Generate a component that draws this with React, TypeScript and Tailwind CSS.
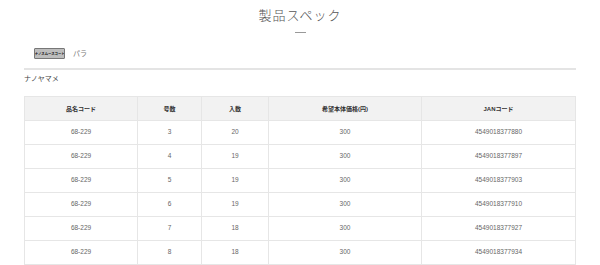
const FONT = { fontFamily: '"Liberation Sans", "Noto Sans CJK JP", sans-serif' };

const rows = [
  { code: "68-229", go: "3", iri: "20", price: "300", jan: "4549018377880" },
  { code: "68-229", go: "4", iri: "19", price: "300", jan: "4549018377897" },
  { code: "68-229", go: "5", iri: "19", price: "300", jan: "4549018377903" },
  { code: "68-229", go: "6", iri: "19", price: "300", jan: "4549018377910" },
  { code: "68-229", go: "7", iri: "18", price: "300", jan: "4549018377927" },
  { code: "68-229", go: "8", iri: "18", price: "300", jan: "4549018377934" },
];

const heads = ["品名コード", "号数", "入数", "希望本体価格(円)", "JANコード"];

export default function App() {
  return (
    <div className="w-[600px] h-[265px] overflow-hidden bg-white" style={FONT}>
      {/* 見出し */}
      <div className="pt-[7px]">
        <h1 className="h-[18px] text-center text-[13px] leading-[18px] font-light text-[#555] tracking-[1px]">
          製品スペック
        </h1>
        <div className="mx-auto mt-[7px] h-px w-[11px] bg-[#999]" />
      </div>

      {/* タブ */}
      <div className="mt-[15px] flex items-center pl-[34px]">
        <div className="flex h-[11px] w-[31px] items-center justify-center overflow-hidden rounded-[1px] border border-[#777] bg-[#bdbdbd]">
          <span className="inline-block scale-[0.56] text-[6px] font-bold leading-none text-[#111] whitespace-nowrap">
            ナノスムースコート
          </span>
        </div>
        <span className="ml-[8px] text-[7px] leading-none text-[#777]">パラ</span>
      </div>

      <div className="mx-[24px] mt-[9px] h-[2px] bg-[#e4e4e4]" />

      <div className="mx-[24px] mt-[4px] text-[7px] leading-[9px] text-[#444]">ナノヤマメ</div>

      {/* スペック表 */}
      <table className="ml-[24px] mt-[13px] w-[551px] table-fixed border-collapse">
        <colgroup>
          <col className="w-[113px]" />
          <col className="w-[64px]" />
          <col className="w-[67px]" />
          <col className="w-[153px]" />
          <col className="w-[154px]" />
        </colgroup>
        <thead>
          <tr className="h-[24px] bg-[#f2f2f2]">
            {heads.map((h) => (
              <th key={h} className="border border-[#e6e6e6] p-0 text-center text-[6px] font-bold leading-none text-[#333]">
                {h}
              </th>
            ))}
          </tr>
        </thead>
        <tbody>
          {rows.map((r) => (
            <tr key={r.jan} className="h-[24px]">
              {[r.code, r.go, r.iri, r.price, r.jan].map((v, i) => (
                <td key={i} className="border border-[#e6e6e6] p-0 text-center text-[6.5px] leading-none text-[#666]">
                  {v}
                </td>
              ))}
            </tr>
          ))}
        </tbody>
      </table>
    </div>
  );
}
